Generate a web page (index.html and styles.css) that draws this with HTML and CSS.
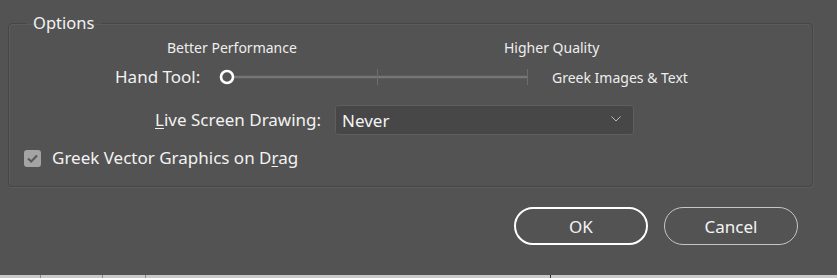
FILE: index.html
```html
<!DOCTYPE html>
<html>
<head>
<meta charset="utf-8">
<link rel="stylesheet" href="styles.css">
</head>
<body>
<div class="dialog">
  <fieldset class="group">
    <legend class="legend">Options</legend>
    <div class="row-scale">
      <span class="scale-left">Better Performance</span>
      <span class="scale-right">Higher Quality</span>
    </div>
    <div class="row-slider">
      <span class="label hand-label">Hand Tool:</span>
      <svg class="slider" width="312" height="18" viewBox="0 0 312 18">
        <line x1="15" y1="9" x2="308" y2="9" stroke="#767676" stroke-width="2.5"/>
        <line x1="158.5" y1="1" x2="158.5" y2="17" stroke="#6c6c6c" stroke-width="1"/>
        <line x1="308.5" y1="1" x2="308.5" y2="17" stroke="#6c6c6c" stroke-width="1"/>
        <circle cx="8" cy="9" r="6" fill="none" stroke="#ffffff" stroke-width="2.6"/>
      </svg>
      <span class="greek-text">Greek Images &amp; Text</span>
    </div>
    <div class="row-select">
      <span class="label live-label"><u>L</u>ive Screen Drawing:</span>
      <div class="select">
        <span class="select-value">Never</span>
        <svg class="chev" width="10" height="6" viewBox="0 0 10 6"><path d="M0.5 0.5 L5 5 L9.5 0.5" fill="none" stroke="#bdbdbd" stroke-width="1"/></svg>
      </div>
    </div>
    <div class="row-check">
      <span class="checkbox">
        <svg width="17" height="17" viewBox="0 0 17 17"><path d="M4 8.5 L7.2 11.5 L13 5.5" fill="none" stroke="#5a5a5a" stroke-width="2.2"/></svg>
      </span>
      <span class="label">Greek Vector Graphics on D<u>r</u>ag</span>
    </div>
  </fieldset>
  <div class="buttons">
    <button class="btn btn-ok">OK</button>
    <button class="btn btn-cancel">Cancel</button>
  </div>
</div>
<div class="footer-strip">
  <span class="mark m1"></span><span class="mark m2"></span><span class="mark m3"></span><span class="mark m4"></span>
</div>
</body>
</html>
```
FILE: styles.css
```css
html, body {
  margin: 0;
  padding: 0;
  background: #535353;
  width: 837px;
  height: 278px;
  overflow: hidden;
  font-family: "Noto Sans", "Open Sans", sans-serif;
  color: #f0f0f0;
}
.dialog {
  height: 275px;
  display: flex;
  flex-direction: column;
}
.group {
  margin: 13px 0 0 8px;
  width: 805px;
  height: 174px;
  flex: none;
  box-sizing: border-box;
  border: 1px solid #464646;
  border-radius: 4px;
  box-shadow: inset 1px 1px 0 #5c5c5c, 1px 1px 0 #5c5c5c;
  padding: 0;
}
.legend {
  margin-left: 17px;
  padding: 0 7px;
  font-size: 16.5px;
  line-height: 20px;
  color: #f2f2f2;
}
.row-scale {
  display: flex;
  font-size: 14px;
  line-height: 18px;
  margin-top: 6px;
  color: #eeeeee;
}
.scale-left { margin-left: 158px; width: 337px; }
.row-slider {
  display: flex;
  align-items: center;
  height: 24px;
  margin-top: 8px;
}
.label {
  font-size: 17px;
  line-height: 22px;
  color: #f2f2f2;
}
.label u { text-underline-offset: 2px; }
.hand-label { margin-left: 106px; width: 96px; }
.slider { margin-left: 8px; display: block; flex: none; }
.greek-text {
  margin-left: 21px;
  font-size: 14px;
  color: #eeeeee;
}
.row-select {
  display: flex;
  align-items: center;
  margin-top: 16px;
}
.live-label { margin-left: 146px; width: 180px; }
.select {
  width: 299px;
  height: 30px;
  flex: none;
  box-sizing: border-box;
  background: #474747;
  border: 1px solid #5e5e5e;
  border-radius: 3px;
  display: flex;
  align-items: center;
  justify-content: space-between;
  padding: 0 12px 0 6px;
}
.select-value {
  font-size: 17px;
  color: #f4f4f4;
}
.chev { display: block; margin-top: -2px; }
.row-check {
  display: flex;
  align-items: center;
  margin-top: 12px;
}
.checkbox {
  margin-left: 15px;
  width: 17px;
  height: 17px;
  border-radius: 3px;
  background: #a4a4a4;
  display: block;
  flex: none;
}
.checkbox svg { display: block; }
.row-check .label { margin-left: 11px; }
.buttons {
  display: flex;
  justify-content: flex-end;
  gap: 16px;
  padding-right: 39px;
  margin-top: 20px;
}
.btn {
  width: 134px;
  height: 38px;
  border-radius: 19px;
  background: transparent;
  font-family: "Noto Sans", "Open Sans", sans-serif;
  font-size: 17px;
  color: #f4f4f4;
  box-sizing: border-box;
  padding: 0;
}
.btn-ok { border: 2.5px solid #ffffff; }
.btn-cancel { border: 1px solid #c6c6c6; }
.footer-strip {
  height: 3px;
  background: #c9c9c9;
  position: relative;
}
.mark {
  position: absolute;
  top: 0;
  width: 1px;
  height: 3px;
  background: #8a8a8a;
}
.m1 { left: 40px; }
.m2 { left: 102px; }
.m3 { left: 145px; }
.m4 { left: 550px; background: #333; }
```
